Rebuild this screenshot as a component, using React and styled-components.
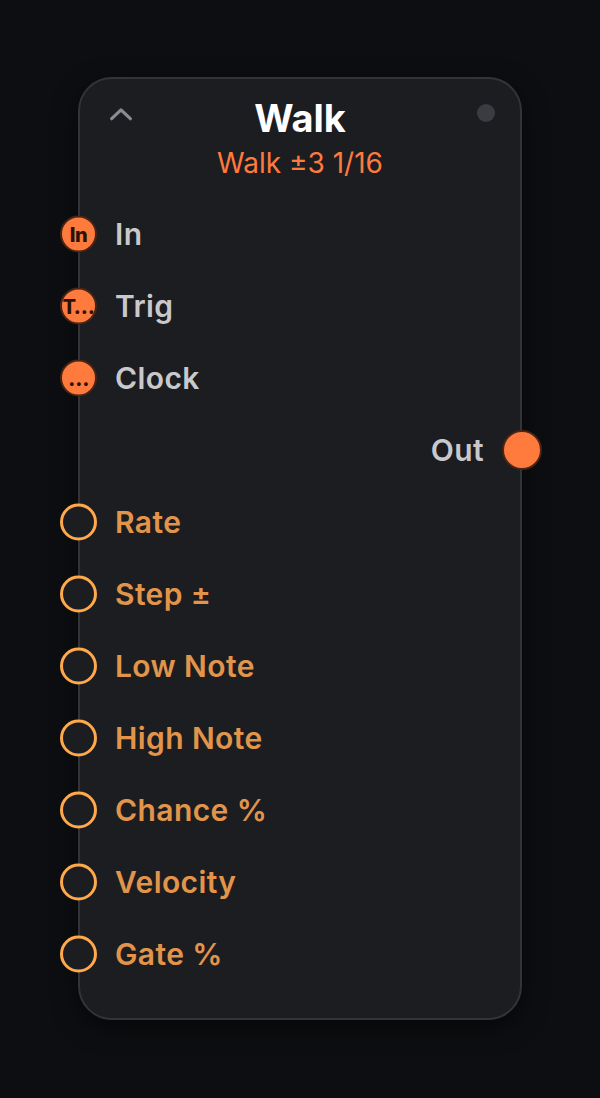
import React from "react";
import styled, { createGlobalStyle } from "styled-components";

const Global = createGlobalStyle`
  html, body {
    margin: 0;
    background: #0d0e11;
    font-family: Inter, "Noto Sans", sans-serif;
  }
`;

const Page = styled.div`
  min-height: 1098px;
  display: flex;
  justify-content: center;
  align-items: flex-start;
  padding-top: 77px;
  box-sizing: border-box;
`;

const Card = styled.div`
  position: relative;
  width: 444px;
  box-sizing: border-box;
  background: #1c1d21;
  border: 2px solid #333438;
  border-radius: 34px;
  box-shadow: 0 8px 24px rgba(0, 0, 0, 0.5);
  padding: 17px 0 28px;
`;

const Header = styled.div`
  position: relative;
  display: flex;
  flex-direction: column;
  align-items: center;
  margin-bottom: 18px;
`;

const Title = styled.div`
  color: #ffffff;
  font-size: 38px;
  font-weight: 700;
  line-height: 44px;
`;

const Subtitle = styled.div`
  color: #ff7a3d;
  font-size: 28px;
  font-weight: 400;
  line-height: 34px;
  margin-top: 6px;
`;

const Chevron = styled.svg`
  position: absolute;
  left: 27px;
  top: 4px;
`;

const StatusDot = styled.div`
  position: absolute;
  right: 25px;
  top: 8px;
  width: 18px;
  height: 18px;
  border-radius: 50%;
  background: #3b3c41;
`;

const Row = styled.div`
  position: relative;
  height: 72px;
  display: flex;
  align-items: center;
  justify-content: ${(p) => (p.$out ? "flex-end" : "flex-start")};
  padding: ${(p) => (p.$out ? "0 36px 0 0" : "0 0 0 35px")};
`;

const Label = styled.span`
  font-size: 30px;
  font-weight: 600;
  letter-spacing: 0.4px;
  color: ${(p) => (p.$param ? "#e2954a" : "#c9c9cd")};
`;

const Handle = styled.div`
  position: absolute;
  top: 50%;
  ${(p) => (p.$out ? "right: -22px;" : "left: -20px;")}
  transform: translateY(-50%);
  width: ${(p) => (p.$out ? 40 : 37)}px;
  height: ${(p) => (p.$out ? 40 : 37)}px;
  box-sizing: border-box;
  border-radius: 50%;
  display: flex;
  align-items: center;
  justify-content: center;
  overflow: hidden;
  background: ${(p) => (p.$param ? "#1c1d21" : "#ff7a3d")};
  border: ${(p) => (p.$param ? "3px solid #ffa94a" : "2px solid #4a2414")};
  color: #2a1208;
  font-size: 20px;
  font-weight: 800;
  letter-spacing: -0.5px;
  white-space: nowrap;
`;

const inputs = [
  { label: "In", tag: "In" },
  { label: "Trig", tag: "T…" },
  { label: "Clock", tag: "…" },
];

const params = ["Rate", "Step ±", "Low Note", "High Note", "Chance %", "Velocity", "Gate %"];

export default function App() {
  return (
    <>
      <Global />
      <Page>
        <Card>
          <Header>
            <Chevron width="28" height="28" viewBox="0 0 24 24" fill="none" stroke="#8a8b90" strokeWidth="2.8" strokeLinecap="round" strokeLinejoin="round">
              <path d="M4 16l8-7.5 8 7.5" />
            </Chevron>
            <Title>Walk</Title>
            <Subtitle>Walk ±3 1/16</Subtitle>
            <StatusDot />
          </Header>
          {inputs.map((i) => (
            <Row key={i.label}>
              <Handle>{i.tag}</Handle>
              <Label>{i.label}</Label>
            </Row>
          ))}
          <Row $out>
            <Label>Out</Label>
            <Handle $out />
          </Row>
          {params.map((p) => (
            <Row key={p}>
              <Handle $param />
              <Label $param>{p}</Label>
            </Row>
          ))}
        </Card>
      </Page>
    </>
  );
}
